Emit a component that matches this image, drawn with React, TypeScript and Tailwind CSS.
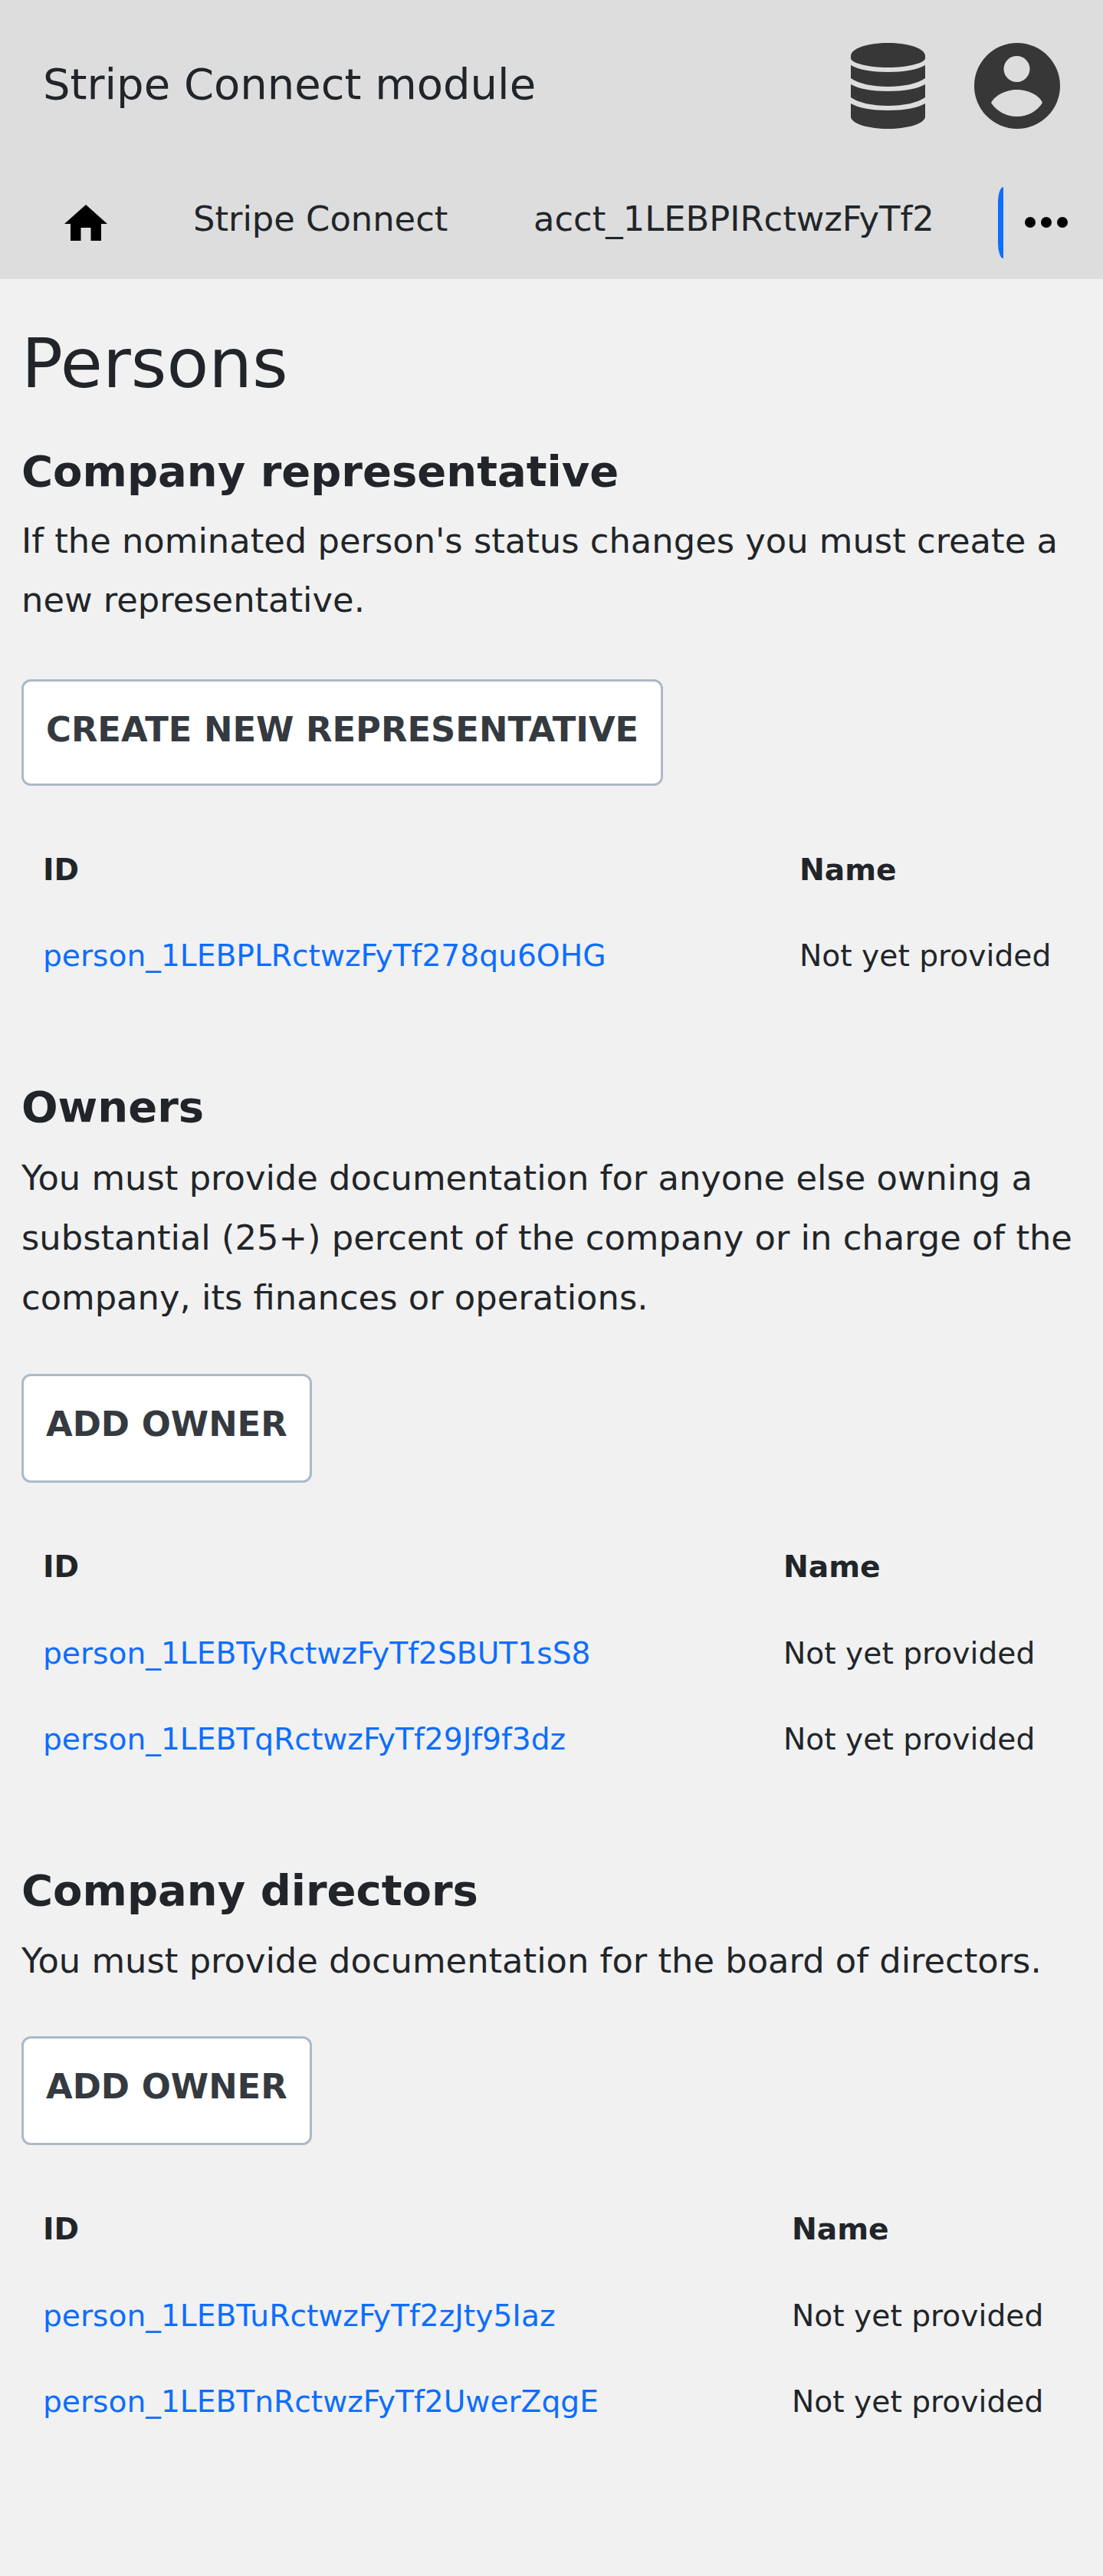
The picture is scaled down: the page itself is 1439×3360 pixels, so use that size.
const rows = {
  rep: [["person_1LEBPLRctwzFyTf278qu6OHG", "Not yet provided"]],
  owners: [
    ["person_1LEBTyRctwzFyTf2SBUT1sS8", "Not yet provided"],
    ["person_1LEBTqRctwzFyTf29Jf9f3dz", "Not yet provided"],
  ],
  directors: [
    ["person_1LEBTuRctwzFyTf2zJty5Iaz", "Not yet provided"],
    ["person_1LEBTnRctwzFyTf2UwerZqgE", "Not yet provided"],
  ],
};

function PeopleTable({ data, idWidth }: { data: string[][]; idWidth: string }) {
  return (
    <table className="w-full table-fixed border-collapse text-[39.2px] leading-[58.8px] text-[#212529]">
      <thead>
        <tr>
          <th className={`${idWidth} p-[26.88px_28px] text-left font-bold`}>ID</th>
          <th className="p-[26.88px_28px] text-left font-bold">Name</th>
        </tr>
      </thead>
      <tbody>
        {data.map((r) => (
          <tr key={r[0]}>
            <td className="p-[26.88px_28px]">
              <a className="text-[#0d6efd]">{r[0]}</a>
            </td>
            <td className="p-[26.88px_28px] whitespace-nowrap">{r[1]}</td>
          </tr>
        ))}
      </tbody>
    </table>
  );
}

function Section({
  title,
  text,
  button,
  data,
  mb,
  idWidth,
  buttonClass,
  paraClass,
}: {
  title: string;
  text: string[];
  button: string;
  data: string[][];
  mb: string;
  idWidth: string;
  buttonClass: string;
  paraClass: string;
}) {
  return (
    <section className={mb}>
      <h2 className="text-[56px] font-bold leading-[67px] text-[#212529]">{title}</h2>
      <p className={`${paraClass} text-[44.8px] text-[#212529]`}>
        {text.map((t) => (
          <span key={t} className="block">{t}</span>
        ))}
      </p>
      <button className={`${buttonClass} block rounded-[12px] border-[3px] border-[#adb9c7] bg-white px-[29px] pt-[37px] text-[44.8px] font-bold leading-[52px] text-[#343a40]`}>
        {button}
      </button>
      <div className="mt-[54px]">
        <PeopleTable data={data} idWidth={idWidth} />
      </div>
    </section>
  );
}

export default function App() {
  return (
    <div className="min-h-[3360px] bg-[#f1f1f1] font-['DejaVu_Sans',sans-serif]">
      <header className="h-[364px] bg-[#dddddd]">
        <div className="flex h-[220px] items-center justify-between px-[56px]">
          <span className="text-[56px] text-[#212529]">Stripe Connect module</span>
          <div className="mt-[4px] flex items-center gap-[64px]">
            <svg width="97" height="112" viewBox="0 0 97 112" fill="#373737">
              <path d="M48.500 0C75 0 97 7 97 17V20C97 26 75 32 48.500 32C22 32 0 26 0 20V17C0 7 22 0 48.500 0Z" />
              <path d="M0 29C10 35 28 38 48.500 38C69 38 87 35 97 29V46C87 53 69 57 48.500 57C28 57 10 53 0 46Z" />
              <path d="M0 54C10 60 28 63 48.500 63C69 63 87 60 97 54V71C87 78 69 82 48.500 82C28 82 10 78 0 71Z" />
              <path d="M0 79C10 85 28 88 48.500 88C69 88 87 85 97 79V96C97 105 75 112 48.500 112C22 112 0 105 0 96Z" />
            </svg>
            <svg width="112" height="112" viewBox="0 0 112 112">
              <circle cx="56" cy="56" r="56" fill="#373737" />
              <circle cx="55.500" cy="34" r="17" fill="#dddddd" />
              <path d="M22 78C27 68 42 61 55.500 61C70 61 85 68 89 78C82 89 70 96 55.500 96C42 96 29 89 22 78Z" fill="#dddddd" />
            </svg>
          </div>
        </div>
        <nav className="flex h-[144px] items-start text-[44.8px] leading-[66px] text-[#212529]">
          <div className="w-[252px] pl-[84px] pt-[47px]">
            <svg className="block" width="56" height="47" viewBox="0 0 56 47" fill="#000000">
              <path d="M28 0L56 25H48V47H34.500V30H21.500V47H8V25H0Z" />
            </svg>
          </div>
          <span className="mt-[33px] w-[444px]">Stripe Connect</span>
          <span className="mt-[33px] w-[606px]">acct_1LEBPIRctwzFyTf2</span>
          <div className="flex items-start">
            <div className="mt-[24px] h-[93px] w-[7px] rounded-l-[7px_20px] bg-[#0d6efd]" />
            <svg className="ml-[28px] mt-[63px]" width="56" height="14" viewBox="0 0 56 14" fill="#000000">
              <circle cx="7" cy="7" r="7" />
              <circle cx="28" cy="7" r="7" />
              <circle cx="49" cy="7" r="7" />
            </svg>
          </div>
        </nav>
      </header>
      <main className="px-[28px] pt-[60px]">
        <h1 className="mb-[57px] text-[89.6px] leading-[100px] text-[#212529]">Persons</h1>
        <Section
          mb="mb-[106px]"
          title="Company representative"
          text={["If the nominated person's status changes you must create a", "new representative."]}
          button="CREATE NEW REPRESENTATIVE"
          data={rows.rep}
          idWidth="w-[987px]"
          paraClass="mt-[19px] leading-[77px]"
          buttonClass="mt-[65px] pb-[44px]"
        />
        <Section
          mb="mb-[106px]"
          title="Owners"
          text={["You must provide documentation for anyone else owning a", "substantial (25+) percent of the company or in charge of the", "company, its finances or operations."]}
          button="ADD OWNER"
          data={rows.owners}
          idWidth="w-[966px]"
          paraClass="mt-[21px] leading-[78px]"
          buttonClass="mt-[60px] pb-[47px]"
        />
        <Section
          mb=""
          title="Company directors"
          text={["You must provide documentation for the board of directors."]}
          button="ADD OWNER"
          data={rows.directors}
          idWidth="w-[977px]"
          paraClass="mt-[20px] leading-[77.5px]"
          buttonClass="mt-[60px] pb-[47px]"
        />
      </main>
    </div>
  );
}
